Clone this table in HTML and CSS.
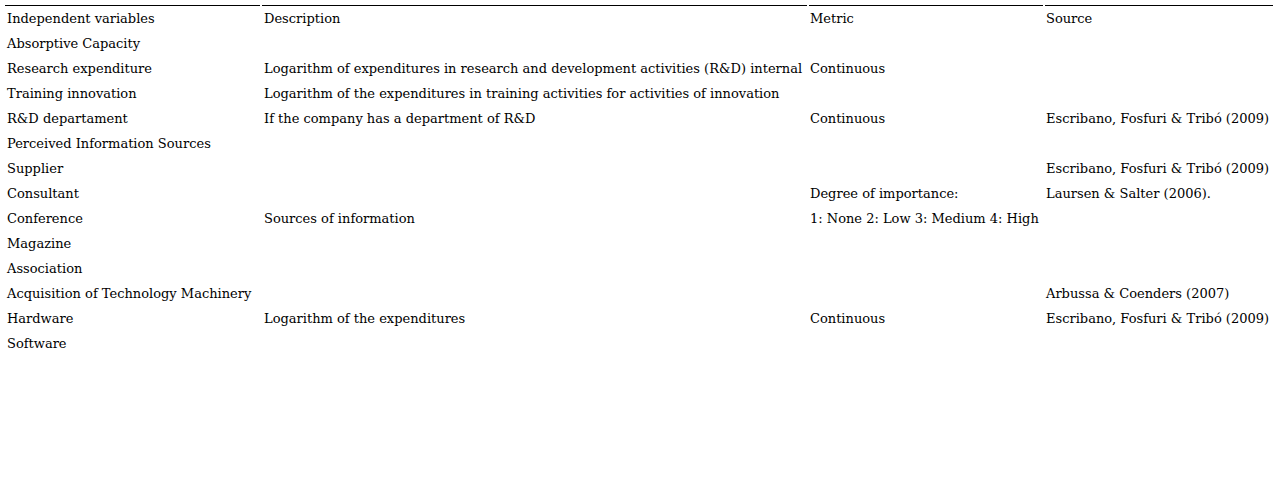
FILE: index.html
```html
<!DOCTYPE html>
<html>
<head>
<meta charset="utf-8">
<link rel="stylesheet" href="styles.css">
</head>
<body>
<table class="vars">
<colgroup>
<col class="c1"><col class="c2"><col class="c3"><col class="c4">
</colgroup>
<thead>
<tr><th>Independent variables</th><th>Description</th><th>Metric</th><th>Source</th></tr>
</thead>
<tbody>
<tr><td>Absorptive Capacity</td><td></td><td></td><td></td></tr>
<tr><td>Research expenditure</td><td>Logarithm of expenditures in research and development activities (R&amp;D) internal</td><td>Continuous</td><td></td></tr>
<tr><td>Training innovation</td><td>Logarithm of the expenditures in training activities for activities of innovation</td><td></td><td></td></tr>
<tr><td>R&amp;D departament</td><td>If the company has a department of R&amp;D</td><td>Continuous</td><td>Escribano, Fosfuri &amp; Tribó (2009)</td></tr>
<tr><td>Perceived Information Sources</td><td></td><td></td><td></td></tr>
<tr><td>Supplier</td><td></td><td></td><td>Escribano, Fosfuri &amp; Tribó (2009)</td></tr>
<tr><td>Consultant</td><td></td><td>Degree of importance:</td><td>Laursen &amp; Salter (2006).</td></tr>
<tr><td>Conference</td><td>Sources of information</td><td>1: None 2: Low 3: Medium 4: High</td><td></td></tr>
<tr><td>Magazine</td><td></td><td></td><td></td></tr>
<tr><td>Association</td><td></td><td></td><td></td></tr>
<tr><td>Acquisition of Technology Machinery</td><td></td><td></td><td>Arbussa &amp; Coenders (2007)</td></tr>
<tr><td>Hardware</td><td>Logarithm of the expenditures</td><td>Continuous</td><td>Escribano, Fosfuri &amp; Tribó (2009)</td></tr>
<tr><td>Software</td><td></td><td></td><td></td></tr>
</tbody>
</table>
</body>
</html>
```
FILE: styles.css
```css
html, body {
  margin: 0;
  padding: 0;
  background: #fff;
}
body {
  padding: 3px 0 0 3px;
  font-family: "DejaVu Serif", "Liberation Serif", serif;
  font-size: 13px;
  color: #000;
}
.vars {
  table-layout: fixed;
  width: 1272px;
  border-collapse: separate;
  border-spacing: 2px;
  margin: 0;
}
.c1 { width: 255px; }
.c2 { width: 545px; }
.c3 { width: 234px; }
.c4 { width: 228px; }
.vars th,
.vars td {
  box-sizing: border-box;
  padding: 2px 2px 0;
  height: 23px;
  text-align: left;
  font-weight: normal;
  vertical-align: middle;
  white-space: nowrap;
  overflow: hidden;
}
.vars th {
  height: 24px;
}
.vars td:nth-child(3),
.vars th:nth-child(3),
.vars td:nth-child(4),
.vars th:nth-child(4) {
  padding-left: 1px;
}
.vars th {
  border-top: 1px solid #000;
}
```
